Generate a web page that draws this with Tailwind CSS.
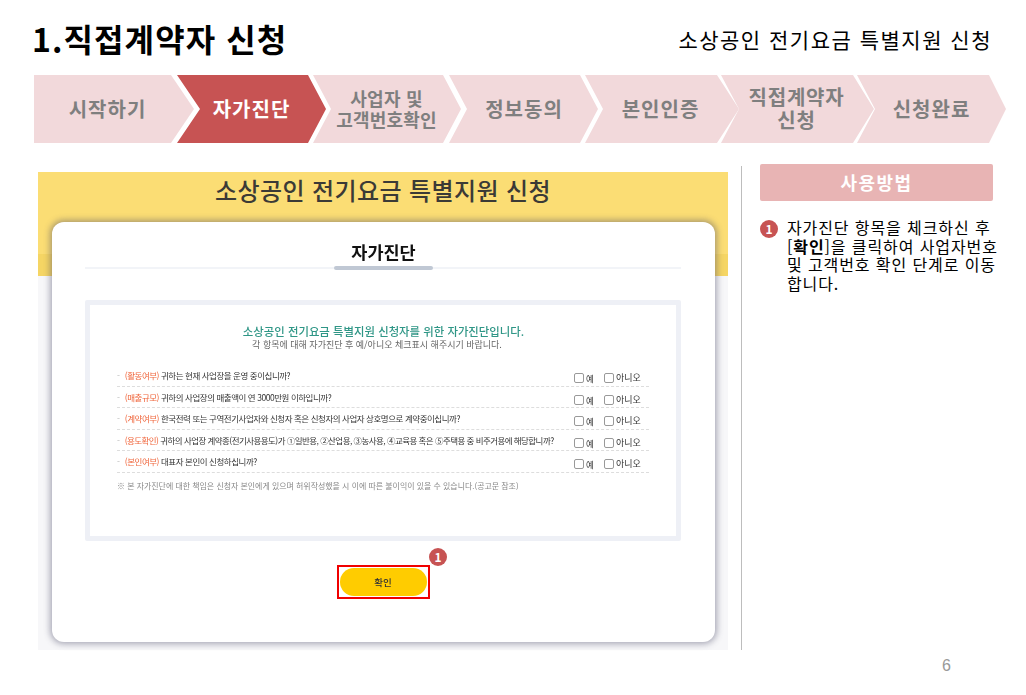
<!DOCTYPE html>
<html lang="ko">
<head>
<meta charset="utf-8">
<script src="https://cdn.jsdelivr.net/npm/@tailwindcss/browser@4"></script>
</head>
<body class="bg-white">
<div class="relative w-[1026px] h-[695px] overflow-hidden bg-white text-black font-['Noto_Sans_CJK_KR','Noto_Sans',sans-serif]">
  <header class="flex items-center justify-between h-[75px] pl-[32px] pr-[34px] pt-[3px]">
    <h1 class="text-[32px] font-bold leading-none tracking-[1.1px] pb-[2px]">1.직접계약자 신청</h1>
    <p class="text-[21px] leading-none tracking-[1.5px]">소상공인 전기요금 특별지원 신청</p>
  </header>

  <nav class="flex h-[68px] pl-[34px] text-[#7f7f7f] font-semibold text-center">
    <div class="w-[160px] flex items-center justify-center pr-[13px] pb-[1px] bg-[#f2d9db] text-[20px] tracking-[1px] [clip-path:polygon(0_0,137px_0,160px_34px,137px_68px,0_68px)]">시작하기</div>
    <div class="w-[149px] -ml-[17px] flex items-center justify-center pb-[1px] bg-[#c75353] text-white text-[20px] tracking-[1px] [clip-path:polygon(0_0,131px_0,149px_34px,131px_68px,0_68px,23px_34px)]">자가진단</div>
    <div class="w-[148px] -ml-[13px] flex items-center justify-center pl-[9px] pr-[10px] pb-[1px] bg-[#f2d9db] text-[18px] leading-[21px] tracking-[0.2px] [clip-path:polygon(0_0,130px_0,148px_34px,130px_68px,0_68px,18px_34px)]">사업자 및<br>고객번호확인</div>
    <div class="w-[149px] -ml-[12px] flex items-center justify-center pl-[1px] pb-[1px] bg-[#f2d9db] text-[20px] tracking-[1px] [clip-path:polygon(0_0,131px_0,149px_34px,131px_68px,0_68px,18px_34px)]">정보동의</div>
    <div class="w-[154px] -ml-[13px] flex items-center justify-center pl-[5px] pr-[8px] pb-[1px] bg-[#f2d9db] text-[20px] tracking-[1px] [clip-path:polygon(0_0,132px_0,154px_34px,132px_68px,0_68px,18px_34px)]">본인인증</div>
    <div class="w-[153px] -ml-[18px] flex items-center justify-center pl-[6px] pr-[8px] pb-[2px] bg-[#f2d9db] text-[20px] leading-[23px] tracking-[0.8px] [clip-path:polygon(0_0,132px_0,153px_34px,132px_68px,0_68px,18px_34px)]">직접계약자<br>신청</div>
    <div class="w-[149px] -ml-[17px] flex items-center justify-center pb-[1px] bg-[#f2d9db] text-[20px] tracking-[1px] [clip-path:polygon(0_0,132px_0,149px_34px,132px_68px,0_68px,18px_34px)]">신청완료</div>
  </nav>

  <main class="flex pt-[23px]">
    <section class="relative ml-[38px] mt-[6px] w-[690px] h-[478px] bg-[#f7f7f9]">
      <div class="h-[104px] bg-[linear-gradient(#fbdd74_0,#fbdd74_82px,#f5d564_82px,#f5d564_104px)] text-center">
        <h2 class="pt-[3px] text-[24px] leading-[30px] tracking-[0.4px] font-medium text-[#3b3a36]">소상공인 전기요금 특별지원 신청</h2>
      </div>
      <div class="absolute left-[14px] top-[50px] w-[663px] h-[420px] bg-white rounded-[12px] shadow-[0_0_6px_2px_rgba(70,70,100,0.45)] flex flex-col items-center pt-[17px] pr-[1px] blur-[0.25px]">
        <div class="w-[596px] h-[30px] border-b-2 border-[#f2f4f8] flex justify-center relative">
          <h3 class="pl-[1px] text-[17.5px] leading-[26px] font-semibold text-[#111]">자가진단</h3>
          <div class="absolute left-[249px] top-[27px] w-[99px] h-[4px] rounded-full bg-[#c0c8d4]"></div>
        </div>
        <div class="mt-[31px] w-[596px] h-[241px] border-[5px] border-[#eef0f6] rounded-[2px] flex flex-col items-center pt-[19px]">
          <p class="pl-[1px] text-[11.4px] leading-[14px] font-medium text-[#2f9686]">소상공인 전기요금 특별지원 신청자를 위한 자가진단입니다.</p>
          <p class="pr-[12px] pt-[1px] text-[9px] leading-[12px] text-[#666]">각 항목에 대해 자가진단 후 예/아니오 체크표시 해주시기 바랍니다.</p>
          <ul class="mt-[14px] w-[532px] text-[8.5px] leading-[12px] text-[#333] tracking-[-0.45px] whitespace-nowrap">
            <li class="h-[21.5px] flex items-center justify-between border-b border-dashed border-[#ddd]"><span><span class="text-[#bbb] tracking-normal">-&nbsp;&nbsp;</span><span class="text-[#f0663c]">(활동여부)</span> 귀하는 현재 사업장을 운영 중이십니까?</span><span class="flex items-center pt-[6px] tracking-normal"><i class="w-[10px] h-[10px] border border-[#999] rounded-[2px] mr-[2px]"></i><span class="w-[8px]">예</span><i class="w-[10px] h-[10px] border border-[#999] rounded-[2px] ml-[10px] mr-[2px]"></i><span class="w-[26px] mr-[7px] text-[9px]">아니오</span></span></li>
            <li class="h-[21.5px] flex items-center justify-between border-b border-dashed border-[#ddd]"><span><span class="text-[#bbb] tracking-normal">-&nbsp;&nbsp;</span><span class="text-[#f0663c]">(매출규모)</span> 귀하의 사업장의 매출액이 연 3000만원 이하입니까?</span><span class="flex items-center pt-[6px] tracking-normal"><i class="w-[10px] h-[10px] border border-[#999] rounded-[2px] mr-[2px]"></i><span class="w-[8px]">예</span><i class="w-[10px] h-[10px] border border-[#999] rounded-[2px] ml-[10px] mr-[2px]"></i><span class="w-[26px] mr-[7px] text-[9px]">아니오</span></span></li>
            <li class="h-[21.5px] flex items-center justify-between border-b border-dashed border-[#ddd]"><span><span class="text-[#bbb] tracking-normal">-&nbsp;&nbsp;</span><span class="text-[#f0663c]">(계약여부)</span> 한국전력 또는 구역전기사업자와 신청자 혹은 신청자의 사업자 상호명으로 계약중이십니까?</span><span class="flex items-center pt-[6px] tracking-normal"><i class="w-[10px] h-[10px] border border-[#999] rounded-[2px] mr-[2px]"></i><span class="w-[8px]">예</span><i class="w-[10px] h-[10px] border border-[#999] rounded-[2px] ml-[10px] mr-[2px]"></i><span class="w-[26px] mr-[7px] text-[9px]">아니오</span></span></li>
            <li class="h-[21.5px] flex items-center justify-between border-b border-dashed border-[#ddd]"><span class="tracking-[-0.55px]"><span class="text-[#bbb] tracking-normal">-&nbsp;&nbsp;</span><span class="text-[#f0663c]">(용도확인)</span> 귀하의 사업장 계약종(전기사용용도)가 ①일반용, ②산업용, ③농사용, ④교육용 혹은 ⑤주택용 중 비주거용에 해당합니까?</span><span class="flex items-center pt-[6px] tracking-normal"><i class="w-[10px] h-[10px] border border-[#999] rounded-[2px] mr-[2px]"></i><span class="w-[8px]">예</span><i class="w-[10px] h-[10px] border border-[#999] rounded-[2px] ml-[10px] mr-[2px]"></i><span class="w-[26px] mr-[7px] text-[9px]">아니오</span></span></li>
            <li class="h-[21.5px] flex items-center justify-between border-b border-dashed border-[#ddd]"><span><span class="text-[#bbb] tracking-normal">-&nbsp;&nbsp;</span><span class="text-[#f0663c]">(본인여부)</span> 대표자 본인이 신청하십니까?</span><span class="flex items-center pt-[6px] tracking-normal"><i class="w-[10px] h-[10px] border border-[#999] rounded-[2px] mr-[2px]"></i><span class="w-[8px]">예</span><i class="w-[10px] h-[10px] border border-[#999] rounded-[2px] ml-[10px] mr-[2px]"></i><span class="w-[26px] mr-[7px] text-[9px]">아니오</span></span></li>
          </ul>
          <p class="mt-[7px] w-[532px] text-[7.95px] leading-[12px] text-[#888]">※ 본 자가진단에 대한 책임은 신청자 본인에게 있으며 허위작성했을 시 이에 따른 불이익이 있을 수 있습니다.(공고문 참조)</p>
        </div>
        <div class="relative mt-[24px] w-[93px] h-[34px] border-2 border-[#f00000] p-[1px]">
          <div class="w-full h-full rounded-full bg-[#ffcc00] flex items-center justify-center text-[9.5px] font-medium text-[#333]">확인</div>
        </div>
      </div>
      <span class="absolute left-[391px] top-[376px] w-[18px] h-[18px] rounded-full bg-[#c75353] text-white text-[12px] font-bold leading-none flex items-center justify-center">1</span>
    </section>

    <div class="ml-[13px] w-px h-[484px] bg-[#bdbdbd]"></div>

    <aside class="ml-[18px] w-[240px]">
      <div class="w-[233px] h-[37px] -mt-[2px] rounded-[2px] bg-[#e8b4b4] text-white font-bold text-[18px] tracking-[1.4px] flex items-center justify-center">사용방법</div>
      <div class="mt-[17px] flex">
        <span class="mt-[2px] shrink-0 w-[18px] h-[18px] rounded-full bg-[#c75353] text-white text-[12px] font-bold leading-none flex items-center justify-center">1</span>
        <p class="ml-[9px] text-[16px] leading-[18.7px] tracking-[0.9px] whitespace-nowrap">자가진단 항목을 체크하신 후<br>[<b>확인</b>]을 클릭하여 사업자번호<br>및 고객번호 확인 단계로 이동<br>합니다.</p>
      </div>
    </aside>
  </main>

  <span class="absolute left-[942px] top-[657px] text-[16px] leading-[18px] text-[#999] font-['Liberation_Sans',sans-serif]">6</span>
</div>
</body>
</html>
